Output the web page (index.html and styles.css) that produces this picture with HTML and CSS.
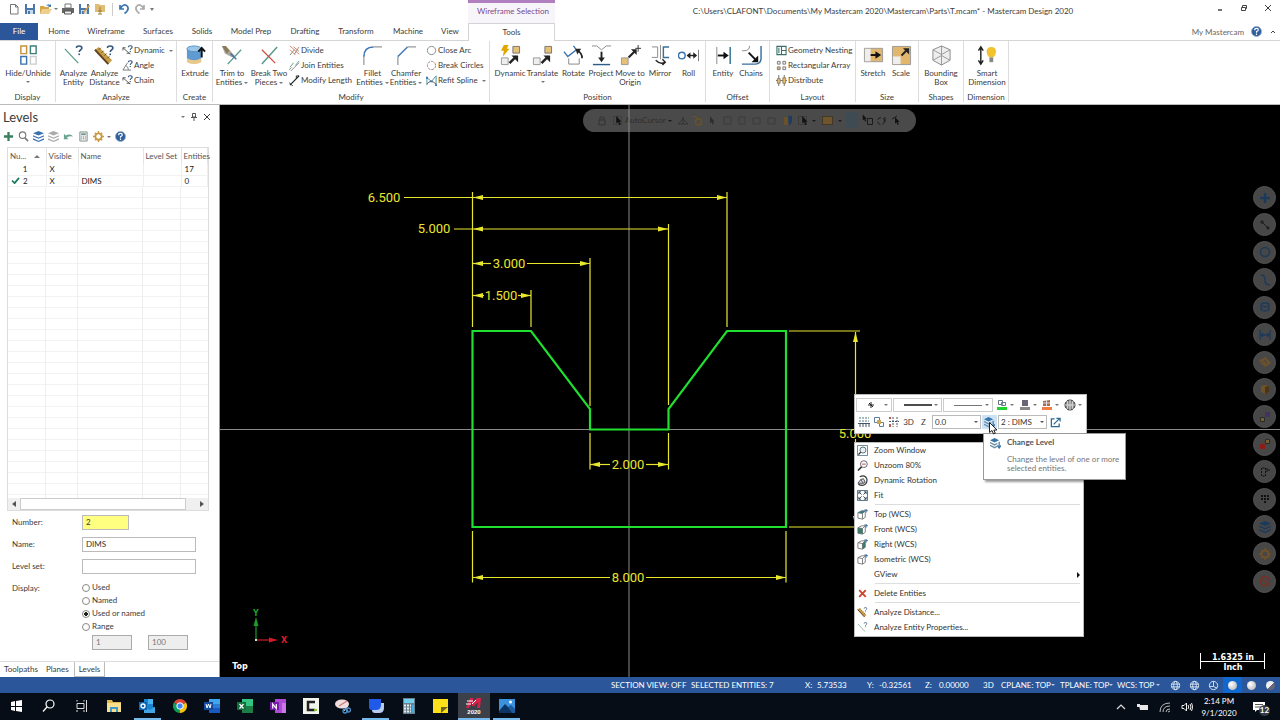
FILE: index.html
```html
<!DOCTYPE html>
<html lang="en">
<head>
<meta charset="utf-8">
<title>Mastercam Design 2020</title>
<link rel="stylesheet" href="styles.css">
</head>
<body>
<svg class="defs" aria-hidden="true">
  <symbol id="q" viewBox="0 0 8 11"><path d="M1 3.2C1 .4 6.8.4 6.8 3.2 6.8 5.2 4 5 4 7.4M4 9v1.8" fill="none" stroke="#34577f" stroke-width="1.7"/></symbol>
  <symbol id="page" viewBox="0 0 12 12"><path d="M2.5 1.5h5l2.500 2.500v7h-7.500zM7.500 1.500v2.500h2.500" fill="#fff" stroke="#777"/></symbol>
  <symbol id="save" viewBox="0 0 12 12"><path d="M1 1h10v10H1z" fill="#4a78ad"/><path d="M3 1h6v4H3z" fill="#fff"/><path d="M3 7h6v4H3z" fill="#c9d8ea"/><path d="M4 8h2v3H4z" fill="#4a78ad"/></symbol>
  <symbol id="folder" viewBox="0 0 12 12"><path d="M0 3h4l1 1h4v7H0z" fill="#d7a54c"/><path d="M2 6h10l-3 5H0z" fill="#efcf8e"/><path d="M6 3q2-3 4-1l1-1v3H8l1-1q-1-1-3 0z" fill="#3f7ab5"/></symbol>
  <symbol id="print" viewBox="0 0 12 12"><path d="M3 1h6v4H3z" fill="#fff" stroke="#777"/><path d="M0 5h12v5H0z" fill="#666"/><path d="M2.500 8h7v3h-7z" fill="#eee" stroke="#555"/></symbol>
  <symbol id="zip" viewBox="0 0 12 12"><path d="M1 1h4l1 1h5v7H1z" fill="#dfbd74"/><path d="M6 4v7M4 8h4M4 11h4" stroke="#a37a2e"/></symbol>
  <symbol id="undo" viewBox="0 0 12 12"><path d="M2 2v4h4M2.300 5.500Q6-.5 9.500 3.500q2 3.500-3 7" fill="none" stroke="currentColor" stroke-width="1.700"/></symbol>
  <symbol id="help" viewBox="0 0 12 12"><circle cx="6" cy="6" r="5.500" fill="#2d5f9e" stroke="#9ab3cd"/><path d="M4 4.500q0-2 2-2t2 1.700Q8 5.500 6 6v1.300M6 8.300v1.400" fill="none" stroke="#fff" stroke-width="1.300"/></symbol>
  <symbol id="hide" viewBox="0 0 22 22" fill="none" stroke-width="1.500"><path d="M3 1h6v8H3z" stroke="#c69038"/><path d="M13 1h6v8h-6z" stroke="#3f8076"/><path d="M3 12h6v8H3z" stroke="#3971ad"/><path d="M13 12h6v8h-6z" stroke="#ccc"/></symbol>
  <symbol id="anent" viewBox="0 0 22 22"><path d="M2 4l14 15" stroke="#5a9b8b" stroke-width="1.300"/><use href="#q" x="13" y="0" width="8" height="11"/></symbol>
  <symbol id="andist" viewBox="0 0 22 22"><path d="M1 5l4-3 14 14-4 4z" fill="#c99d46"/><path d="M1 5l14 15" stroke="#5c4320" stroke-width="2"/><path d="M5 5l2-2M8 8l2-2M11 11l2-2M14 14l2-2" stroke="#5c4320"/><use href="#q" x="13" y="0" width="8" height="11"/></symbol>
  <symbol id="smdyn" viewBox="0 0 12 12"><path d="M1 3l8 7M1 3l3 0M1 3v3M5 9h4" fill="none" stroke="#555"/><use href="#q" x="6" y="0" width="6" height="8"/></symbol>
  <symbol id="smang" viewBox="0 0 12 12"><path d="M1 11L6 3M1 11h9M4 6q3 1 3 5" fill="none" stroke="#777"/><use href="#q" x="6" y="0" width="6" height="8"/></symbol>
  <symbol id="extr" viewBox="0 0 22 22"><path d="M2 14h15v4q-7.500 4-15 0z" fill="#e9c88c"/><path d="M2 4h15v10q-7.500 4-15 0z" fill="#5f9bd0"/><ellipse cx="9.500" cy="4" rx="7.500" ry="3" fill="#9cc7e8" stroke="#5790c2"/><path d="M17.500 13V4M14 7l3.500-4L21 7" stroke="#111" stroke-width="2" fill="none"/></symbol>
  <symbol id="trim" viewBox="0 0 22 22"><path d="M6 20L20 5" stroke="#5a9b8b" stroke-width="1.400"/><path d="M0 1h4l10 11-3 1L3 9z" fill="#aaa59b"/><path d="M0 1h4l4 5-3 3z" fill="#8d7b5e"/><path d="M9 9l6 6" stroke="#3971ad" stroke-width="1.500"/></symbol>
  <symbol id="brk" viewBox="0 0 22 22"><path d="M3 20L19 2" stroke="#5a9b8b" stroke-width="1.600"/><path d="M3 5l14 14" stroke="#d34b3c" stroke-width="1.300"/></symbol>
  <symbol id="divide" viewBox="0 0 12 12"><path d="M1 11L6 5M6 10l5-8" stroke="#888"/><path d="M1 1l10 9M1 5l6 6M5 2l6 5" stroke="#cf7c60"/></symbol>
  <symbol id="join" viewBox="0 0 12 12"><path d="M1 8l4-5M7 6l4-5" stroke="#5a9b8b"/><path d="M2 12L11 3M0 11l3-3" stroke="#888"/></symbol>
  <symbol id="modlen" viewBox="0 0 12 12"><path d="M1 11L11 1" stroke="#222" stroke-width="1.300"/><path d="M0 8l4 4M8 4V1h3" stroke="#222" fill="none"/></symbol>
  <symbol id="fillet" viewBox="0 0 22 22" fill="none"><path d="M2 21V11M12 2h9" stroke="#777"/><path d="M2 12Q2 2 12 2" stroke="#3f74b8" stroke-width="1.500"/></symbol>
  <symbol id="chamf" viewBox="0 0 22 22" fill="none"><path d="M2 21V12M12 2h9" stroke="#777"/><path d="M2 12L12 2" stroke="#3f74b8" stroke-width="1.500"/></symbol>
  <symbol id="circ" viewBox="0 0 12 12"><circle cx="6" cy="6" r="4.500" fill="none" stroke="#7c8b8b"/></symbol>
  <symbol id="circb" viewBox="0 0 12 12"><circle cx="6" cy="6" r="4.500" fill="none" stroke="#9c7b76" stroke-dasharray="3 1"/></symbol>
  <symbol id="refit" viewBox="0 0 12 12"><path d="M1 11V3l5 4 5-6v10" fill="none" stroke="#3f8ca0"/><path d="M1 10q4-6 10 0" fill="none" stroke="#555"/><path d="M0 2h2v2H0zM5 6h2v2H5zM10 10h2v2h-2z" fill="#3971ad"/></symbol>
  <symbol id="dyn" viewBox="0 0 22 22"><path d="M4 0h5L7 4h3L3 12l1-6H1z" fill="#e1a700"/><path d="M13.500 1.500h7v7h-7z" fill="#e6c078" stroke="#777"/><path d="M1.500 13.500h7v7h-7z" fill="#eee" stroke="#999"/><path d="M10 19l7-7" stroke="#222" stroke-width="2.600"/><path d="M12 11h7v7z" fill="#222"/></symbol>
  <symbol id="trans" viewBox="0 0 22 22"><path d="M13.500 1.500h7v7h-7z" fill="#e6c078" stroke="#777"/><path d="M1.500 13.500h7v7h-7z" fill="#eee" stroke="#999"/><path d="M10 19l7-7" stroke="#222" stroke-width="2.600"/><path d="M12 11h7v7z" fill="#222"/></symbol>
  <symbol id="rot" viewBox="0 0 22 22" fill="none"><path d="M1 7l4 5 9-7-3-4" stroke="#3971ad" stroke-width="1.400"/><path d="M6 14v6h11v-6" stroke="#888"/><path d="M20 14q0-6-5-8" stroke="#222" stroke-width="1.800"/><path d="M13 4l6 0-4 6z" fill="#222"/></symbol>
  <symbol id="proj" viewBox="0 0 22 22" fill="none"><path d="M1 1h5l5 4 5-4h5" stroke="#888"/><path d="M2 20.500h18" stroke="#2d5f86" stroke-width="1.500"/><path d="M11 7v8" stroke="#222" stroke-width="2"/><path d="M7.500 13h7L11 18z" fill="#222"/></symbol>
  <symbol id="move" viewBox="0 0 22 22"><path d="M1.500 13.500h7v7h-7z" fill="#e6c078" stroke="#999"/><path d="M9 13l7-7" stroke="#222" stroke-width="2.200"/><path d="M11.500 4.500h6v6z" fill="#222"/><path d="M19 0v7M16 3.500h6" stroke="#333"/></symbol>
  <symbol id="mirror" viewBox="0 0 22 22" fill="none"><path d="M2 2h6v11H2M11 0v15" stroke="#888"/><path d="M20 2h-6v11h6" stroke="#3b6f99" stroke-width="1.500"/><path d="M6 16q5 5 10 2M13 15l3 3-3 3" stroke="#222" stroke-width="1.500"/></symbol>
  <symbol id="roll" viewBox="0 0 22 22" fill="none"><circle cx="4" cy="11" r="3.500" stroke="#3971ad" stroke-width="1.500"/><path d="M10 11h9" stroke="#222" stroke-width="1.500"/><path d="M13 7.500v7L9 11zM16 7.500v7l4-3.500z" fill="#222"/><path d="M21.500 5v12" stroke="#777"/></symbol>
  <symbol id="offent" viewBox="0 0 22 22" fill="none"><path d="M4 2v18" stroke="#888"/><path d="M18 2v18" stroke="#3a7b94" stroke-width="1.600"/><path d="M5 11h8" stroke="#111" stroke-width="2"/><path d="M11 7l5.500 4-5.500 4z" fill="#111"/></symbol>
  <symbol id="offch" viewBox="0 0 22 22" fill="none"><path d="M1 6h2q6 0 6-5" stroke="#888"/><path d="M1 20h14q6 0 6-6V1" stroke="#3a6f9f" stroke-width="1.500"/><path d="M8 8l7 7" stroke="#111" stroke-width="2"/><path d="M18 11v7h-7z" fill="#111"/></symbol>
  <symbol id="nest" viewBox="0 0 12 12"><path d="M1 1.500h10v9H1zM6 1.500v9M6 6h5" fill="#fff" stroke="#3c6f6a" stroke-width="1.200"/><path d="M2 3h2v6H2z" fill="#79aba0"/></symbol>
  <symbol id="array" viewBox="0 0 12 12" fill="#eee" stroke="#777"><path d="M1.500 1.500h3v3h-3zM7.500 1.500h3v3h-3zM7.500 7.500h3v3h-3z"/><path d="M1.500 7.500h3v3h-3z" fill="#e6c078"/></symbol>
  <symbol id="distr" viewBox="0 0 12 12"><path d="M3 0v12M9 0v12M0 6h12" stroke="#666"/><path d="M1.500 4h3v5h-3zM7.500 3h3v6h-3z" fill="#e6c078" stroke="#8d7b5e"/></symbol>
  <symbol id="stretch" viewBox="0 0 22 22"><path d="M1.500 3.500h19v14h-19z" fill="#e3b66e" stroke="#999"/><path d="M2 4h6v13H2z" fill="#eee"/><path d="M8 10.500h7" stroke="#111" stroke-width="2"/><path d="M13 6.500l6 4-6 4z" fill="#111"/></symbol>
  <symbol id="scale" viewBox="0 0 22 22"><path d="M1.500 1.500h19v19h-19z" fill="#e3b66e" stroke="#999"/><path d="M2 12h8v8H2z" fill="#eee"/><path d="M11 11l6-6" stroke="#222" stroke-width="2"/><path d="M12.500 3.500h6.500V10z" fill="#222"/></symbol>
  <symbol id="bbox" viewBox="0 0 22 22"><path d="M11 1l9 4v11l-9 5-9-5V5z" fill="#eee" stroke="#888"/><path d="M2 5l9 5 9-5M11 10v11M11 1v10L2 16M11 11l9 5" fill="none" stroke="#999"/></symbol>
  <symbol id="smart" viewBox="0 0 22 22"><path d="M4 3v16M1.500 6L4 2l2.500 4M1.500 16L4 20l2.500-4" fill="none" stroke="#222" stroke-width="1.500"/><path d="M15 2q5 0 5 5 0 3-3 6h-4q-3-3-3-6 0-5 5-5z" fill="#f2c32e"/><path d="M13 13h4v5h-4z" fill="#888"/></symbol>
  <symbol id="plus" viewBox="0 0 12 12"><path d="M6 1v10M1 6h10" stroke="currentColor" stroke-width="2.500"/></symbol>
  <symbol id="mag" viewBox="0 0 12 12"><circle cx="5" cy="4.500" r="3.500" fill="none" stroke="currentColor" stroke-width="1.200"/><path d="M7.500 7.500L11 11" stroke="currentColor" stroke-width="1.700"/></symbol>
  <symbol id="layers" viewBox="0 0 12 12" fill="currentColor"><path d="M6 0l6 2.500L6 5 0 2.500zM0 4.500l6 2.500L12 4.500V6L6 8.500 0 6zM0 8l6 2.500L12 8V9.500L6 12 0 9.500z"/></symbol>
  <symbol id="reset" viewBox="0 0 12 12"><path d="M1 3v6h5L4 7q3-2 7-1-3-4-8-1z" fill="#6aa294"/></symbol>
  <symbol id="calc" viewBox="0 0 12 12"><path d="M2 1h8v10H2z" fill="#eee" stroke="#7d8f8a"/><path d="M3.500 2.500h5v2h-5z" fill="#6d9a8e"/><path d="M3.500 6.500h5M3.500 8.500h5" stroke="#777" stroke-dasharray="1 1"/></symbol>
  <symbol id="gear" viewBox="0 0 12 12"><circle cx="6" cy="6" r="3.500" fill="none" stroke="currentColor" stroke-width="2"/><path d="M6 0v2M6 10v2M0 6h2M10 6h2M2 2l1 1M9 9l1 1M10 2L9 3M3 9l-1 1" stroke="currentColor" stroke-width="1.500"/></symbol>
  <symbol id="pin" viewBox="0 0 8 8"><path d="M2.500.5h3V4h-3zM1 4.500h6M4 4.500V8" fill="none" stroke="#555"/></symbol>
  <symbol id="cross" viewBox="0 0 8 8"><path d="M1 1l6 6M7 1L1 7" stroke="currentColor"/></symbol>
  <symbol id="cube" viewBox="0 0 12 12"><path d="M1 4l4-2h4v7l-3 2-5-1z" fill="#fff" stroke="#777"/><path d="M1 4l5 1 3-3M6 5v6" fill="none" stroke="#777"/><path d="M8 1l4 1M10 0v4" stroke="#3a6f9f"/></symbol>
  <symbol id="cursor" viewBox="0 0 12 12"><path d="M3 0v10l2.300-2L7 12l2-1-2-3.500h3z" fill="currentColor"/></symbol>
  <symbol id="globe" viewBox="0 0 12 12" fill="none" stroke="#dce8f6"><circle cx="6" cy="6" r="4.500"/><ellipse cx="6" cy="6" rx="2" ry="4.500"/><path d="M1.500 4.500h9M1.500 7.500h9"/></symbol>
  <symbol id="fitwin" viewBox="0 0 12 12"><path d="M.5 .5h11v11H.5z" fill="#fff" stroke="#4a6a80"/><path d="M2 2l3 3M10 2L7 5M2 10l3-3M10 10L7 7M2 4.500V2h2.500M7.500 2H10v2.500M2 7.500V10h2.500M7.500 10H10V7.500" fill="none" stroke="#345"/></symbol>
  <symbol id="zwin" viewBox="0 0 12 12"><path d="M.5 .5h11v11H.5z" fill="#fff" stroke="#5f7f93"/><circle cx="6.500" cy="5.500" r="3.300" fill="#e7f0f5" stroke="#4a6a70"/><path d="M4 8l-2.500 2.500" stroke="#333" stroke-width="1.500"/></symbol>
  <symbol id="unz" viewBox="0 0 12 12"><circle cx="7.500" cy="4.500" r="3.700" fill="#fff" stroke="#665560"/><path d="M5 7.500l-4 4" stroke="#333" stroke-width="1.700"/><path d="M5.500 4.500h4" stroke="#a44"/></symbol>
  <symbol id="dynrot" viewBox="0 0 12 12"><path d="M3 2q6-3 8 3-0 6-5 6.300-3 0-4.500-1.500" fill="none" stroke="#333" stroke-width="1.300"/><path d="M4 5l-3 4h6zM4 5l3-1 2 4-2 1" fill="#ddd" stroke="#445"/></symbol>
  <symbol id="chlev" viewBox="0 0 12 12"><path d="M5 0l5 2.500L5 5 0 2.500z" fill="#3b75a8"/><path d="M0 5l5 2.500L8 6M0 8l5 2.500L8 9" fill="none" stroke="#6e8fa8" stroke-width="1.500"/><path d="M10 4v6M8 8l2 3 2-3" fill="none" stroke="#3b75a8" stroke-width="1.300"/></symbol>
</svg>

<header class="titlebar">
  <div class="qat">
    <button aria-label="New"><svg class="i12"><use href="#page"/></svg></button>
    <button aria-label="Save"><svg class="i12"><use href="#save"/></svg></button>
    <button class="with-caret" aria-label="Open"><svg class="i12"><use href="#folder"/></svg><i class="caret"></i></button>
    <button aria-label="Print"><svg class="i12"><use href="#print"/></svg></button>
    <button aria-label="Save as"><svg class="i12" viewBox="0 0 12 12"><use href="#save"/><path d="M5 9l6-7 1 1-6 7z" fill="#d99c34"/></svg></button>
    <button aria-label="Zip2Go"><svg class="i12"><use href="#zip"/></svg></button>
    <span class="qat-sep"></span>
    <button class="blue" aria-label="Undo"><svg class="i12"><use href="#undo"/></svg></button>
    <button class="faded" aria-label="Redo"><svg class="i12 flip"><use href="#undo"/></svg></button>
    <button class="more" aria-label="Customize"><i class="caret"></i></button>
  </div>
  <div class="context">Wireframe Selection</div>
  <div class="doc-title">C:\Users\CLAFONT\Documents\My Mastercam 2020\Mastercam\Parts\T.mcam* - Mastercam Design 2020</div>
  <div class="win-btns">
    <button aria-label="Minimize"><svg class="i8" viewBox="0 0 8 8"><path d="M2 6h4" stroke="#444" stroke-width="1.500"/></svg></button>
    <button aria-label="Restore"><svg class="i8" viewBox="0 0 8 8" fill="none" stroke="#444"><path d="M1.500 3.500h4v3h-4zM2.500 3.500v-2h4v3h-1"/></svg></button>
    <button aria-label="Close"><svg class="i8"><use href="#cross"/></svg></button>
  </div>
</header>

<nav class="tabs">
  <button class="file w38">File</button><button class="w42">Home</button><button class="w52">Wireframe</button><button class="w52">Surfaces</button><button class="w36">Solids</button><button class="w62">Model Prep</button><button class="w46">Drafting</button><button class="w56">Transform</button><button class="w48">Machine</button><button class="w36">View</button><button class="tools">Tools</button>
  <span class="grow"></span>
  <span class="mymc">My Mastercam</span>
  <button class="helpbtn" aria-label="Help"><svg class="i10"><use href="#help"/></svg></button>
  <button class="collapse" aria-label="Collapse ribbon"><svg class="i8" viewBox="0 0 8 8"><path d="M2 5l2-2 2 2" fill="none" stroke="#444"/></svg></button>
</nav>

<section class="ribbon">
  <div class="group g-display"><div class="tools-row">
    <button class="big w56"><svg class="i22"><use href="#hide"/></svg><span>Hide/Unhide</span><i class="caret"></i></button>
  </div><h3>Display</h3></div>
  <div class="group g-analyze"><div class="tools-row">
    <button class="big w31"><svg class="i22"><use href="#anent"/></svg><span>Analyze<br>Entity</span></button>
    <button class="big w31"><svg class="i22"><use href="#andist"/></svg><span>Analyze<br>Distance</span></button>
    <div class="stack">
      <button><svg class="i10"><use href="#smdyn"/></svg>Dynamic<i class="caret"></i></button>
      <button><svg class="i10"><use href="#smang"/></svg>Angle</button>
      <button><svg class="i10"><use href="#smdyn"/></svg>Chain</button>
    </div>
  </div><h3>Analyze</h3></div>
  <div class="group g-create"><div class="tools-row">
    <button class="big w36"><svg class="i22"><use href="#extr"/></svg><span>Extrude</span></button>
  </div><h3>Create</h3></div>
  <div class="group g-modify"><div class="tools-row">
    <button class="big w38"><svg class="i22"><use href="#trim"/></svg><span>Trim to<br>Entities<i class="caret"></i></span></button>
    <button class="big w36"><svg class="i22"><use href="#brk"/></svg><span>Break Two<br>Pieces<i class="caret"></i></span></button>
    <div class="stack s-wide">
      <button><svg class="i10"><use href="#divide"/></svg>Divide</button>
      <button><svg class="i10"><use href="#join"/></svg>Join Entities</button>
      <button><svg class="i10"><use href="#modlen"/></svg>Modify Length</button>
    </div>
    <button class="big w31"><svg class="i22"><use href="#fillet"/></svg><span>Fillet<br>Entities<i class="caret"></i></span></button>
    <button class="big w36"><svg class="i22"><use href="#chamf"/></svg><span>Chamfer<br>Entities<i class="caret"></i></span></button>
    <div class="stack">
      <button><svg class="i10"><use href="#circ"/></svg>Close Arc</button>
      <button><svg class="i10"><use href="#circb"/></svg>Break Circles</button>
      <button><svg class="i10"><use href="#refit"/></svg>Refit Spline<i class="caret"></i></button>
    </div>
  </div><h3>Modify</h3></div>
  <div class="group g-position"><div class="tools-row">
    <button class="big w34"><svg class="i22"><use href="#dyn"/></svg><span>Dynamic</span></button>
    <button class="big w31"><svg class="i22"><use href="#trans"/></svg><span>Translate</span><i class="caret"></i></button>
    <button class="big w31"><svg class="i22"><use href="#rot"/></svg><span>Rotate</span></button>
    <button class="big w24"><svg class="i22"><use href="#proj"/></svg><span>Project</span></button>
    <button class="big w34"><svg class="i22"><use href="#move"/></svg><span>Move to<br>Origin</span></button>
    <button class="big w26"><svg class="i22"><use href="#mirror"/></svg><span>Mirror</span></button>
    <button class="big w31"><svg class="i22"><use href="#roll"/></svg><span>Roll</span></button>
  </div><h3>Position</h3></div>
  <div class="group g-offset"><div class="tools-row">
    <button class="big w28"><svg class="i22"><use href="#offent"/></svg><span>Entity</span></button>
    <button class="big w28"><svg class="i22"><use href="#offch"/></svg><span>Chains</span></button>
  </div><h3>Offset</h3></div>
  <div class="group g-layout"><div class="tools-row">
    <div class="stack">
      <button><svg class="i10"><use href="#nest"/></svg>Geometry Nesting</button>
      <button><svg class="i10"><use href="#array"/></svg>Rectangular Array</button>
      <button><svg class="i10"><use href="#distr"/></svg>Distribute</button>
    </div>
  </div><h3>Layout</h3></div>
  <div class="group g-size"><div class="tools-row">
    <button class="big w28"><svg class="i22"><use href="#stretch"/></svg><span>Stretch</span></button>
    <button class="big w28"><svg class="i22"><use href="#scale"/></svg><span>Scale</span></button>
  </div><h3>Size</h3></div>
  <div class="group g-shapes"><div class="tools-row">
    <button class="big w44"><svg class="i22"><use href="#bbox"/></svg><span>Bounding<br>Box</span></button>
  </div><h3>Shapes</h3></div>
  <div class="group g-shapes"><div class="tools-row">
    <button class="big w46"><svg class="i22"><use href="#smart"/></svg><span>Smart<br>Dimension</span></button>
  </div><h3>Dimension</h3></div>
</section>

<main class="work">
  <aside class="panel">
    <div class="panel-head"><h2>Levels</h2><i class="caret"></i><svg class="i8"><use href="#pin"/></svg><svg class="i8"><use href="#cross"/></svg></div>
    <div class="panel-tools">
      <button class="green" aria-label="Add"><svg class="i10"><use href="#plus"/></svg></button>
      <button class="grey" aria-label="Find"><svg class="i10"><use href="#mag"/></svg></button>
      <button class="blue" aria-label="Show all"><svg class="i10"><use href="#layers"/></svg></button>
      <button class="faded" aria-label="Hide all"><svg class="i10"><use href="#layers"/></svg></button>
      <button aria-label="Reset"><svg class="i10"><use href="#reset"/></svg></button>
      <button aria-label="Report"><svg class="i10"><use href="#calc"/></svg></button>
      <button class="gold with-caret" aria-label="Options"><svg class="i10"><use href="#gear"/></svg><i class="caret"></i></button>
      <button aria-label="Help"><svg class="i10"><use href="#help"/></svg></button>
    </div>
    <div class="list">
      <table>
        <thead><tr><th class="c-num">Nu...<i class="up"></i></th><th class="c-vis">Visible</th><th class="c-name">Name</th><th class="c-set">Level Set</th><th>Entities</th></tr></thead>
        <tbody>
          <tr><td class="num">1</td><td>X</td><td></td><td></td><td>17</td></tr>
          <tr><td class="num"><svg class="tick" viewBox="0 0 10 8"><path d="M1 4l3 3 5-6" fill="none" stroke="#1f7a5c" stroke-width="2"/></svg>2</td><td>X</td><td>DIMS</td><td></td><td>0</td></tr>
        </tbody>
      </table>
      <div class="empty-rows"></div>
      <div class="hscroll"><i class="left"></i><span class="thumb"></span><i class="right"></i></div>
    </div>
    <form class="props">
      <label for="num">Number:</label><input id="num" class="yellow" value="2">
      <label for="name">Name:</label><input id="name" value="DIMS">
      <label for="set">Level set:</label><input id="set">
      <span class="disp">Display:</span>
      <div class="radios">
        <label><input type="radio" name="d">Used</label>
        <label><input type="radio" name="d">Named</label>
        <label><input type="radio" name="d" checked>Used or named</label>
        <label><input type="radio" name="d">Range</label>
        <div class="range"><input value="1" disabled aria-label="From"><input value="100" disabled aria-label="To"></div>
      </div>
    </form>
    <div class="panel-tabs"><button>Toolpaths</button><button>Planes</button><button class="on">Levels</button></div>
  </aside>

  <section class="canvas">
    <div class="selbar">
      <svg viewBox="583 109 333 23">
        <g fill="none" stroke="#333"><path d="M599 120h6v5h-6zM600 120v-3h4v3"/><path d="M613.500 116.500h8v8h-8z" stroke-dasharray="1 1"/><path d="M678 124l5-5 5 5zM683 117v7"/><circle cx="698.500" cy="122" r="3" stroke="#6a5128" stroke-width="1.500"/><path d="M724 117h7v7h-7zM739 117h6v7h-6zM753 118h7v6h-7zM768 118h7v6h-7zM798.500 116.500h8v8h-8z" stroke="#3b3b3b"/></g>
        <path d="M692 116h4l3 3z" fill="#6a5128"/>
        <path d="M822.500 116.500h10v8h-10z" fill="#6e552d" stroke="#2a2010" stroke-dasharray="1 1"/>
        <path d="M846 112h12v16h-12z" fill="#3f4b52"/>
        <path d="M784 117h4v8h-4z" fill="#6a5128"/><path d="M788 116h4v6l-3 4z" fill="#1f3c60"/>
        <g color="#111"><use href="#cursor" x="614" y="116" width="9" height="9"/><use href="#cursor" x="800" y="116" width="9" height="9"/><use href="#cursor" x="861" y="114" width="7" height="8"/><use href="#cursor" x="893" y="117" width="8" height="8"/></g>
        <g color="#2d2d2d"><use href="#cursor" x="708" y="116" width="8" height="9"/></g>
        <g fill="none" stroke="#1b1b1b"><path d="M867.500 118.500h5v6h-5z"/><circle cx="881" cy="121" r="3.500" stroke-dasharray="4 2"/><path d="M892 119l5-3M885 117v5"/></g>
        <path d="M668 120h4l-2 2zM812 120h4l-2 2zM838 120h4l-2 2z" fill="#1b1b1b"/>
        <text class="ac" x="625" y="123">AutoCursor</text>
      </svg>
    </div>

    <div class="quickmask">
      <span class="blue"><svg class="i12"><use href="#plus"/></svg></span>
      <span><svg class="i12" viewBox="0 0 12 12"><path d="M1 3h4M3 1v4M3 3l6 6M7 9h4M9 7v4" fill="none" stroke="#1c1c1c"/></svg></span>
      <span class="blue"><svg class="i12" viewBox="0 0 12 12"><circle cx="6" cy="6" r="4.500" fill="none" stroke="currentColor" stroke-width="1.500"/></svg></span>
      <span class="blue"><svg class="i12" viewBox="0 0 12 12"><path d="M2 1q4 0 4 5t5 5" fill="none" stroke="currentColor" stroke-width="1.500"/></svg></span>
      <span class="blue"><svg class="i12" viewBox="0 0 12 12"><path d="M2 3q4-2 8 0v6q-4 2-8 0zM2 8l8-4M2 4l8 4" fill="none" stroke="currentColor" stroke-width="1.300"/></svg></span>
      <span class="blue"><svg class="i12" viewBox="0 0 12 12"><path d="M1 1v10M11 1v10M2 6h8M4 4L2 6l2 2M8 4l2 2-2 2" fill="none" stroke="currentColor" stroke-width="1.300"/></svg></span>
      <span class="gold"><svg class="i12" viewBox="0 0 12 12"><path d="M1 5l5-3 5 5-5 3zM3 3l4 6M6 2l4 6" fill="none" stroke="currentColor" stroke-width="1.500"/></svg></span>
      <span class="gold"><svg class="i12" viewBox="0 0 12 12"><path d="M2 3l4-1 4 1v6l-4 2-4-2z" fill="currentColor"/><path d="M6 4l4-1v6l-4 2z" fill="#4a3516"/></svg></span>
      <span><svg class="i12" viewBox="0 0 12 12"><path d="M6 1h5v5H6z" fill="#46305f"/><path d="M1.500 6.500h4v4h-4z" fill="#75602f" stroke="#2a2a2a"/></svg></span>
      <span><svg class="i12" viewBox="0 0 12 12"><path d="M6.500 1.500h4v4h-4z" fill="#75602f" stroke="#2a2a2a"/><path d="M1 6h5v5H1z" fill="#8c1c14"/></svg></span>
      <span><svg class="i12" viewBox="0 0 12 12"><path d="M2.500 2v8h4V2zM7 3h3v2H7" fill="none" stroke="#111" stroke-dasharray="2 1"/></svg></span>
      <span><svg class="i12" viewBox="0 0 12 12"><path d="M2 3h8M2 6h8M5 9h3" stroke="#111" stroke-width="2" stroke-dasharray="2 1"/></svg></span>
      <span class="blue"><svg class="i12"><use href="#layers"/></svg></span>
      <span class="gold"><svg class="i12"><use href="#gear"/></svg></span>
      <span><svg class="i12" viewBox="0 0 12 12"><circle cx="6" cy="6" r="4.500" fill="none" stroke="#7a2f22" stroke-width="1.300"/><path d="M3 3l6 6" stroke="#7a2f22" stroke-width="1.300"/></svg></span>
    </div>

    <svg class="drawing" viewBox="220 105 1060 572" role="img" aria-label="Part geometry with dimensions">
      <defs><marker id="arr" viewBox="0 0 10 6" refX="10" refY="3" markerWidth="10" markerHeight="6" markerUnits="userSpaceOnUse" orient="auto-start-reverse"><path d="M0 .5L10 3 0 5.500z" fill="#e9e62e"/></marker></defs>
      <path d="M629 105V677M220 429.500H1280" stroke="#8a8a8a" stroke-width="1"/>
      <g fill="none" stroke="#e9e62e" stroke-width="1.200">
        <path d="M472.500 192V327M727 192V327M668.500 224V405M590 258V406M531 290V327M590 433V469.500M668.500 433V469.500M472.500 531V582.500M786 531V582.500M789 331H860M789 527H860"/>
        <path d="M404 197.500H473M454 229H473"/>
        <path marker-start="url(#arr)" marker-end="url(#arr)" d="M473 197.500H727"/>
        <path marker-start="url(#arr)" marker-end="url(#arr)" d="M473 229H668"/>
        <path marker-start="url(#arr)" d="M473 263.500H491"/><path marker-end="url(#arr)" d="M527 263.500H590"/>
        <path marker-start="url(#arr)" d="M473 295.500H484"/><path marker-end="url(#arr)" d="M518 295.500H531"/>
        <path marker-start="url(#arr)" d="M590 464.500H610"/><path marker-end="url(#arr)" d="M646 464.500H668"/>
        <path marker-start="url(#arr)" d="M473 577.500H610"/><path marker-end="url(#arr)" d="M646 577.500H786"/>
        <path marker-start="url(#arr)" d="M855.500 332V427"/><path marker-end="url(#arr)" d="M855.500 439V526"/>
      </g>
      <path d="M472.500 331H531L590 409V429.500H668.500V409L727 331H786V527H472.500z" fill="none" stroke="#1fe02f" stroke-width="2.200"/>
      <g class="dims">
        <text x="384" y="202">6.500</text><text x="434" y="233">5.000</text><text x="509" y="268">3.000</text><text x="501" y="300">1.500</text><text x="628" y="469">2.000</text><text x="628" y="582">8.000</text><text x="855" y="438">5.000</text>
      </g>
      <g fill="none" stroke-width="1.200"><path d="M256 640V624" stroke="#1f9a2a"/><path d="M256 640H271" stroke="#d01c28"/></g>
      <path d="M253.500 626L256 617l2.500 9z" fill="#1f9a2a"/><path d="M269 637.500l9 2.500-9 2.500z" fill="#d01c28"/><path d="M255 639h2v2h-2z" fill="#ddd"/>
      <g class="axis"><text x="256" y="616" fill="#1f9a2a">Y</text><text x="284" y="643" fill="#e01c28">X</text></g>
      <path d="M1200.500 653v16M1264.500 653v16M1200 661.500h65" stroke="#fff"/>
      <g class="scale"><text x="1233" y="660">1.6325 in</text><text x="1233" y="670">Inch</text><text x="240" y="669">Top</text></g>
    </svg>

    <div class="minibar">
      <div class="mrow">
        <button class="drop d36" aria-label="Point style"><svg viewBox="0 0 8 8" class="i8"><path d="M4 1v6M1 4h6M2 2l4 4" stroke="#222" fill="none"/></svg><i class="caret"></i></button>
        <button class="drop d50" aria-label="Line style"><svg viewBox="0 0 28 4" class="line"><path d="M0 2h28" stroke="#111" stroke-width="1.500"/></svg><i class="caret"></i></button>
        <button class="drop d50" aria-label="Line width"><svg viewBox="0 0 28 4" class="line"><path d="M0 2.500h28" stroke="#777"/></svg><i class="caret"></i></button>
        <button class="ic" aria-label="Wireframe color"><svg viewBox="0 0 12 12" class="i12"><path d="M2.500 1.500h4v4h-4zM5.500 3.500h4v3h-4z" fill="#fff" stroke="#678"/><path d="M1 8h10v3H1z" fill="#1fd32c"/></svg><i class="caret"></i></button>
        <button class="ic" aria-label="Solid color"><svg viewBox="0 0 12 12" class="i12"><path d="M3 1h6v6H3z" fill="#667"/><path d="M1 8h10v3H1z" fill="#888"/></svg><i class="caret"></i></button>
        <button class="ic" aria-label="Surface color"><svg viewBox="0 0 12 12" class="i12"><path d="M2 2l7-1v6H2z" fill="#a8674f"/><path d="M5.500 1v6M2 4h7" stroke="#ddd"/><path d="M1 8h10v3H1z" fill="#f47b41"/></svg><i class="caret"></i></button>
        <button class="ic" aria-label="Material"><svg viewBox="0 0 12 12" class="i12"><circle cx="6" cy="6" r="5" fill="#888" stroke="#333"/><path d="M1 6h10M6 1v10M3 2q2 4 0 8M9 2q-2 4 0 8" stroke="#ddd" fill="none"/></svg><i class="caret"></i></button>
      </div>
      <div class="mrow">
        <button class="ic2" aria-label="Attributes"><svg viewBox="0 0 12 12" class="i12"><path d="M1 2h10M1 5h10" stroke="#4c7d86" stroke-dasharray="2 1"/><path d="M0 7.500h12M2 8v3M5 8v3M8 8v3M11 8v3" stroke="#456"/></svg></button>
        <button class="ic2" aria-label="Copy"><svg viewBox="0 0 12 12" class="i12"><path d="M1.500 1.500h5v5h-5zM6.500 6.500h4v4h-4z" fill="#fff" stroke="#5b7fa0"/><path d="M4 4h4v4H4z" fill="#cfa558"/></svg></button>
        <button class="ic2" aria-label="Move"><svg viewBox="0 0 12 12" class="i12"><path d="M1 1h2v2H1zM1 8h2v3H1z" fill="#b85c50"/><path d="M5 1v10M9 1v10M1 5.500h10" stroke="#456" stroke-dasharray="2 1"/></svg></button>
        <button class="ic2">3D</button><button class="ic2">Z</button>
        <label class="sel"><select aria-label="Z depth"><option>0.0</option></select></label>
        <button class="ic2 hot" aria-label="Change Level"><svg class="i10"><use href="#chlev"/></svg></button>
        <label class="sel"><select aria-label="Level"><option>2 : DIMS</option></select></label>
        <button class="ic2" aria-label="Open in window"><svg viewBox="0 0 12 12" class="i10"><path d="M5 2H1.500v8.500H10V7M4 8l6-6M7 1.500h4V5" fill="none" stroke="#2d6a94" stroke-width="1.400"/></svg></button>
      </div>
    </div>

    <div class="menu" role="menu">
      <button><svg class="i10"><use href="#zwin"/></svg>Zoom Window</button>
      <button><svg class="i10"><use href="#unz"/></svg>Unzoom 80%</button>
      <button><svg class="i10"><use href="#dynrot"/></svg>Dynamic Rotation</button>
      <button><svg class="i10"><use href="#fitwin"/></svg>Fit</button>
      <hr>
      <button><svg class="i10" viewBox="0 0 12 12"><use href="#cube"/><path d="M1 4l4-2h4L6 5z" fill="#3f7a80"/></svg>Top (WCS)</button>
      <button><svg class="i10" viewBox="0 0 12 12"><use href="#cube"/><path d="M1 4l5 1v6l-5-1z" fill="#3f7a6a"/></svg>Front (WCS)</button>
      <button><svg class="i10" viewBox="0 0 12 12"><use href="#cube"/><path d="M6 5l3-3v7l-3 2z" fill="#3f7a6a"/></svg>Right (WCS)</button>
      <button><svg class="i10"><use href="#cube"/></svg>Isometric (WCS)</button>
      <button><span class="i10"></span>GView<i class="sub"></i></button>
      <hr>
      <button><svg class="i10 red" viewBox="-1 -1 10 10"><path d="M1 1l6 6M7 1L1 7" stroke="currentColor" stroke-width="1.700"/></svg>Delete Entities</button>
      <hr>
      <button><svg class="i10"><use href="#andist"/></svg>Analyze Distance...</button>
      <button><svg class="i10"><use href="#anent"/></svg>Analyze Entity Properties...</button>
    </div>

    <div class="tip" role="tooltip">
      <svg class="i10"><use href="#chlev"/></svg>
      <div><strong>Change Level</strong><p>Change the level of one or more selected entities.</p></div>
    </div>
    <svg class="pointer" viewBox="0 0 9 13"><path d="M.5 .5v10l2.500-2 1.500 3.500 1.800-.8L4.800 8H8z" fill="#fff" stroke="#222"/></svg>
  </section>
</main>

<div class="status">
  <span class="s80">SECTION VIEW: OFF</span><span class="s114">SELECTED ENTITIES: 7</span>
  <span class="s12">X:</span><span class="s50">5.73533</span><span class="s12">Y:</span><span class="s46">-0.32561</span><span class="s14">Z:</span><span class="s44">0.00000</span><span class="s18">3D</span>
  <button class="s59">CPLANE: TOP<i class="caret"></i></button><button class="s57">TPLANE: TOP<i class="caret"></i></button><button class="s49">WCS: TOP<i class="caret"></i></button>
  <button class="sh"><svg class="i10"><use href="#globe"/></svg></button><button class="sh"><svg class="i10"><use href="#globe"/></svg></button><button class="sh"><svg class="i10" viewBox="0 0 12 12"><circle cx="6" cy="6" r="4.500" fill="none" stroke="#dce8f6"/><path d="M6 1.500V7M6 7H1.500M6 7l4 2" stroke="#dce8f6"/></svg></button><button class="sh lit"><i class="ball"></i></button><button class="sh"><i class="ball"></i></button><button class="sh"><i class="ball half"></i></button>
</div>

<footer class="taskbar">
  <div class="apps">
    <button aria-label="Start"><svg class="i16" viewBox="0 0 16 16" fill="#fff"><path d="M3 4l4-1v5H3zM8 3l6-1v6H8zM3 9h4v4l-4-1zM8 9h6v5l-6-1z"/></svg></button>
    <button aria-label="Search"><svg class="i16" viewBox="0 0 16 16"><circle cx="9" cy="6" r="4" fill="none" stroke="#fff" stroke-width="1.200"/><path d="M6 9l-4 4.500" stroke="#fff" stroke-width="1.200"/></svg></button>
    <button aria-label="Task view"><svg class="i16" viewBox="0 0 16 16" fill="none" stroke="#ddd"><path d="M3 5.500h7v5H3zM3 3.500V2M10 3.500V2M3 12v2M10 12v2M12.500 2v12"/></svg></button>
    <button aria-label="Explorer"><svg class="i16" viewBox="0 0 16 16"><path d="M1 2h5l1 2h8v10H1z" fill="#e3b94d"/><path d="M1 5h14v9H1z" fill="#fbdf8a"/><path d="M4 9h8v5h-2v-3H6v3H4z" fill="#3f9ad0"/></svg></button>
    <button class="run" aria-label="Outlook"><svg class="i16" viewBox="0 0 16 16"><path d="M5 1h9v8h2v6H5z" fill="#1d83cf"/><path d="M9 1h5v5H9z" fill="#48b3ee"/><path d="M5 9l6 3 5-3v6H5z" fill="#41a5e5"/><path d="M0 4h8v8H0z" fill="#0a64b4"/><circle cx="4" cy="8" r="2" fill="none" stroke="#fff" stroke-width="1.300"/></svg></button>
    <button aria-label="Chrome"><svg class="i16" viewBox="0 0 16 16"><path d="M8 8L1.900 4.500A7 7 0 0 1 14.100 4.500z" fill="#db4437"/><path d="M8 8l6.100-3.500A7 7 0 0 1 8 15z" fill="#f4c20d"/><path d="M8 8v7A7 7 0 0 1 1.900 4.500z" fill="#0f9d58"/><circle cx="8" cy="8" r="3.200" fill="#4285f4" stroke="#fff"/></svg></button>
    <button aria-label="Word"><svg class="i16" viewBox="0 0 16 16"><path d="M5 1h11v5H5z" fill="#41a5ee"/><path d="M5 6h11v4H5z" fill="#2b7cd3"/><path d="M5 10h11v5H5z" fill="#185abd"/><path d="M0 4h9v8H0z" fill="#134a9c"/><path d="M2 6l1 4 1.500-4L6 10l1-4" fill="none" stroke="#fff"/></svg></button>
    <button aria-label="Excel"><svg class="i16" viewBox="0 0 16 16"><path d="M5 1h11v7H5z" fill="#33c481"/><path d="M5 8h11v7H5z" fill="#1d7d47"/><path d="M0 4h9v8H0z" fill="#0f703b"/><path d="M2.500 6l4 4.500M6.500 6l-4 4.500" stroke="#fff" stroke-width="1.200"/></svg></button>
    <button aria-label="OneNote"><svg class="i16" viewBox="0 0 16 16"><path d="M5 1h11v14H5z" fill="#ae4bd5"/><path d="M12 5h4v10h-4z" fill="#ca78e8"/><path d="M0 4h9v8H0z" fill="#7719aa"/><path d="M2.700 10.500V6l3.600 4.500V6" fill="none" stroke="#fff" stroke-width="1.200"/></svg></button>
    <button aria-label="Camtasia"><svg class="i16" viewBox="0 0 16 16"><path d="M0 0h16v16H0z" fill="#f2f5ec"/><path d="M12 4H5v8h7" fill="none" stroke="#222" stroke-width="2.500"/><path d="M11 11h3v2h-3z" fill="#86bf3a"/></svg></button>
    <button aria-label="Snip"><svg class="i16" viewBox="0 0 16 16"><ellipse cx="7" cy="6" rx="7" ry="4.500" fill="#f0dede"/><path d="M4 8l8-5" stroke="#c77" stroke-width="1.200"/><path d="M8 7l5 6M13 8l-4 5" stroke="#dde" /><circle cx="10" cy="13" r="2" fill="none" stroke="#4b8ec8" stroke-width="1.300"/><circle cx="13.500" cy="12" r="2" fill="none" stroke="#4b8ec8" stroke-width="1.300"/></svg></button>
    <button class="run" aria-label="Meetings"><svg class="i16" viewBox="0 0 16 16"><path d="M12 5h4v5q0 5-5 5H7q-3 0-3-3z" fill="#b8ccf2"/><path d="M1 1h12v6q0 5-5 5H4q-3 0-3-3z" fill="#1f5be8"/></svg></button>
    <button aria-label="Calculator"><svg class="i16" viewBox="0 0 16 16"><path d="M2 0h12v16H2z" fill="#6b7f8d"/><path d="M3 1h10v4H3z" fill="#6fd0ef"/><path d="M3 7.500h7M3 10.500h7M3 13.500h7" stroke="#e8edf0" stroke-width="2" stroke-dasharray="2 1"/><path d="M11 7h2v8h-2z" fill="#35b2e5"/></svg></button>
    <button aria-label="Sticky notes"><svg class="i16" viewBox="0 0 16 16"><path d="M0 1h15v14H0z" fill="#fddf1a"/><path d="M8 15V9h7z" fill="#6a6420"/></svg></button>
    <button class="run active" aria-label="Mastercam"><svg class="i16" viewBox="0 0 16 16"><path d="M0 10L4 0h3v4l4-4h4l-1 10h-3l1-6-4 4H6V4L3 10z" fill="#d7204a"/><path d="M1 3h6M0 6h5M10 2l-4 4" stroke="#fff"/><text class="mc" x="8" y="16">2020</text></svg></button>
    <button class="run" aria-label="Photos"><svg class="i16" viewBox="0 0 16 16"><path d="M0 1h16v14H0z" fill="#3a93dc"/><path d="M0 13l6-7 9 9H0z" fill="#0d3564"/><path d="M9 9l3-2 4 4v4h-3z" fill="#1d5c9e"/><circle cx="11.500" cy="4" r="1.500" fill="#fff"/></svg></button>
  </div>
  <div class="tray">
    <svg class="i12" viewBox="0 0 12 12"><path d="M2 8l4-4 4 4" fill="none" stroke="#ddd" stroke-width="1.200"/></svg>
    <svg class="i12" viewBox="0 0 12 12"><path d="M2 4h9v5H3zM0 3h3v3H0z" fill="#e8e8e8"/></svg>
    <svg class="i12" viewBox="0 0 12 12" fill="none" stroke="#bbb"><path d="M1 11Q1 2 11 2M4 11q0-6 7-6M7 11q0-3 4-3M9 11l2-1"/></svg>
    <svg class="i12" viewBox="0 0 12 12" fill="none" stroke="#eee"><path d="M1 4.500h2L5.500 2v8L3 7.500H1zM7 4q1.500 2 0 4M9 3q2 3 0 6M10.500 2q2.500 4 0 8"/></svg>
    <time>2:14 PM<br>9/1/2020</time>
    <div class="notif"><svg class="i12" viewBox="0 0 12 12"><path d="M0 1h12v8H4l-2 2V9H0z" fill="#fff"/><path d="M2 3.500h8M2 6h6" stroke="#555"/></svg><b>12</b></div>
  </div>
</footer>
</body>
</html>
```
FILE: styles.css
```css
* { box-sizing: border-box; }
body { margin: 0; min-height: 100vh; display: flex; flex-direction: column; overflow: hidden; background: #fff; color: #3c3c3c; font: 8px/9px Lato, "Noto Sans", sans-serif; }
button, input, select { font: inherit; color: inherit; }
button { border: 0; padding: 0; margin: 0; background: none; }
h2, h3, p { margin: 0; font-weight: normal; }
svg { display: block; flex: none; }
.defs { position: absolute; width: 0; height: 0; }
.i8 { width: 8px; height: 8px; }
.i10 { width: 11px; height: 11px; }
.i12 { width: 12px; height: 12px; }
.i16 { width: 16px; height: 16px; }
.i22 { width: 21px; height: 21px; }
.flip { transform: scaleX(-1); }
.blue { color: #3973b0; }
.green { color: #3b7f5f; }
.grey { color: #777; }
.gold { color: #c8973c; }
.faded { color: #aaa; }
.red { color: #d0432c; }
.grow { flex: 1; }
.caret { display: inline-block; flex: none; border: 2px solid transparent; border-top-color: #777; border-bottom: 0; margin-left: 3px; vertical-align: middle; }

.titlebar { display: flex; height: 23px; flex: none; }
.qat { display: flex; width: 468px; height: 18px; padding-left: 8px; align-items: center; gap: 4px; }
.qat .with-caret { gap: 2px; }
.qat .with-caret .caret { margin: 0; }
.qat .more .caret { margin: 0; border-top-width: 3px; }
.with-caret { display: flex; align-items: center; }
.qat-sep { width: 1px; height: 13px; background: #ccc; margin: 0 1px 0 2px; }
.context { width: 87px; border-top: 3px solid #b07fc0; background: #f8f5fa; color: #7b4a8c; text-align: center; line-height: 17px; padding-left: 3px; }
.doc-title { flex: 1; text-align: center; line-height: 23px; padding-right: 5px; white-space: nowrap; }
.win-btns { display: flex; height: 16px; gap: 16px; align-items: center; width: 64px; }

.tabs { display: flex; height: 18px; flex: none; border-bottom: 1px solid #d4d4d4; }
.tabs .file { background: #2b579a; color: #fff; }
.tabs .tools { width: 87px; border: 1px solid #d4d4d4; border-bottom: 0; background: #fff; height: 18px; }
.mymc { line-height: 18px; color: #666; }
.helpbtn { margin-left: 7px; }
.collapse { margin: 0 3px 0 7px; }

.w24 { width: 24px; } .w26 { width: 26px; } .w28 { width: 28px; } .w31 { width: 31px; }
.w34 { width: 34px; } .w36 { width: 36px; } .w38 { width: 38px; } .w42 { width: 42px; }
.w44 { width: 44px; } .w46 { width: 46px; } .w48 { width: 48px; } .w52 { width: 52px; }
.w56 { width: 56px; } .w62 { width: 62px; }

.ribbon { display: flex; flex: none; height: 64px; border-bottom: 1px solid #bbb; }
.group { flex: none; height: 61px; border-right: 1px solid #ddd; display: flex; flex-direction: column; padding-top: 4px; }
.group h3 { font-size: 8px; line-height: 9px; text-align: center; }
.tools-row { display: flex; flex: 1; align-items: flex-start; }
.g-display { width: 56px; }
.g-analyze { width: 121px; }
.g-analyze .tools-row { padding-left: 2px; }
.g-create { width: 36px; }
.g-modify { width: 277px; }
.g-position { width: 216px; }
.g-position .tools-row, .g-offset .tools-row, .g-size .tools-row { padding-left: 3px; }
.g-offset { width: 64px; }
.g-layout { width: 86px; }
.g-layout .tools-row { padding-left: 4px; }
.g-size { width: 63px; }
.g-shapes { width: 45px; }
.big { display: flex; flex-direction: column; align-items: center; flex: none; white-space: nowrap; line-height: 9px; }
.big > span { margin-top: 3px; }
.big .caret { margin-left: 2px; }
.big > .caret { margin: 3px 0 0; }
.stack { display: flex; flex-direction: column; padding-left: 2px; margin-top: -2px; }
.s-wide { width: 70px; }
.stack button { display: flex; align-items: center; gap: 1px; height: 15px; white-space: nowrap; }

.work { flex: 1; display: flex; min-height: 0; }
.panel { width: 220px; flex: none; display: flex; flex-direction: column; border-right: 1px solid #999; }
.panel-head { display: flex; align-items: center; gap: 5px; padding: 3px 8px 0 3px; }
.panel-head h2 { flex: 1; font-size: 13px; line-height: 18px; }
.panel-tools { display: flex; gap: 4px; padding: 5px 0 0 3px; height: 21px; align-items: flex-start; }
.list { flex: 1; margin: 0 10px 0 7px; border: 1px solid #ddd; display: flex; flex-direction: column; }
.list table { border-collapse: collapse; table-layout: fixed; width: 100%; color: #222; }
.list th { height: 16px; font-weight: normal; text-align: left; padding: 0 2px; border-right: 1px solid #e4e4e4; color: #555; white-space: nowrap; }
.list td { height: 11px; padding: 0 3px; border-right: 1px solid #eee; border-bottom: 1px solid #f2f2f2; line-height: 10px; }
.c-num { width: 38px; } .c-vis { width: 32px; } .c-name { width: 65px; } .c-set { width: 38px; }
.up { display: inline-block; border: 3px solid transparent; border-bottom: 3px solid #777; border-top: 0; margin-left: 8px; vertical-align: middle; }
.list .num { text-align: right; padding-right: 18px; white-space: nowrap; }
.tick { display: inline-block; width: 9px; height: 7px; margin-right: 3px; }
.empty-rows { flex: 1; background: linear-gradient(#eee, #eee) 37px 0/1px 100% no-repeat, linear-gradient(#eee, #eee) 69px 0/1px 100% no-repeat, linear-gradient(#eee, #eee) 134px 0/1px 100% no-repeat, linear-gradient(#eee, #eee) 172px 0/1px 100% no-repeat, repeating-linear-gradient(#fff 0 10px, #f2f2f2 10px 11px); }
.hscroll { display: flex; height: 12px; align-items: center; background: #f0f0f0; padding: 0 4px; }
.hscroll i { border: 3px solid transparent; }
.hscroll .left { border-right: 4px solid #555; border-left: 0; }
.hscroll .right { border-left: 4px solid #555; border-right: 0; }
.thumb { flex: 1; height: 12px; margin: 0 14px 0 4px; background: #fff; border: 1px solid #ccc; }
.props { display: grid; grid-template-columns: 70px 1fr; row-gap: 7px; padding: 4px 23px 11px 12px; line-height: 15px; }
.props > input { height: 15px; width: 114px; border: 1px solid #bbb; padding: 0 3px; }
.props input { color: #333; }
.props > .yellow { background: #ffff80; width: 47px; }
.radios { display: flex; flex-direction: column; }
.radios label { display: flex; align-items: center; height: 13px; gap: 2px; }
.radios input[type=radio] { appearance: none; width: 8px; height: 8px; margin: 0; border: 1px solid #888; border-radius: 50%; background: #fff; }
.radios input[type=radio]:checked { background: radial-gradient(circle, #222 0 2px, #fff 2px); }
.range { display: flex; gap: 16px; padding: 2px 0 0 10px; }
.range input { width: 40px; height: 15px; border: 1px solid #aaa; background: #eee; color: #777; padding: 0 3px; }
.panel-tabs { display: flex; height: 16px; flex: none; border-top: 1px solid #ddd; }
.panel-tabs button { padding: 0 4px; }
.panel-tabs .on { border: 1px solid #bbb; border-top: 0; background: #fff; height: 15px; margin-left: 1px; }

.canvas { position: relative; flex: 1; background: #000; overflow: hidden; }
.drawing { position: absolute; inset: 0; width: 100%; height: 100%; pointer-events: none; }
.dims { font: 13px Roboto, "Liberation Sans", sans-serif; fill: #e9e62e; text-anchor: middle; }
.axis { font: bold 8px "DejaVu Sans", sans-serif; text-anchor: middle; }
.scale { font: bold 8px "DejaVu Sans", sans-serif; fill: #fff; text-anchor: middle; }
.selbar { position: absolute; left: 363px; top: 4px; width: 333px; height: 23px; border-radius: 12px; background: #4a4a4a; }
.ac { fill: #2e2e2e; font-size: 8px; }
.quickmask { position: absolute; right: 4px; top: 81px; height: 407px; display: flex; flex-direction: column; justify-content: space-between; }
.quickmask span { width: 23px; height: 23px; border-radius: 50%; background: #474747; border: 1px solid #525252; display: grid; place-items: center; }
.quickmask .blue { color: #1c3a5c; }
.quickmask .gold { color: #6f5228; }

.minibar { position: absolute; left: 634px; top: 289px; width: 233px; height: 40px; background: #fff; border: 1px solid #bbb; padding: 3px 1px; display: flex; flex-direction: column; gap: 3px; }
.mrow { display: flex; height: 14px; align-items: center; }
.drop { display: flex; align-items: center; justify-content: space-between; height: 14px; border: 1px solid #ccc; padding: 0 3px 0 10px; margin-right: 1px; }
.drop .caret { margin: 0; }
.d36 { width: 36px; } .d50 { width: 50px; }
.line { width: 28px; height: 4px; }
.ic { display: flex; align-items: center; width: 23px; padding-left: 2px; }
.ic .caret { margin-left: 2px; }
.ic2 { width: 15px; height: 14px; display: grid; place-items: center; flex: none; }
.hot { background: #cde3f5; }
.sel { position: relative; display: block; }
.sel select { appearance: none; width: 49px; height: 14px; border: 1px solid #bbb; background: #fff; padding: 0 2px; color: #333; display: block; margin: 0 1px; border-radius: 0; }
.sel::after { content: ""; position: absolute; right: 4px; top: 6px; border: 2px solid transparent; border-top-color: #555; border-bottom: 0; }
.menu { position: absolute; left: 634px; top: 337px; width: 230px; background: #fff; border: 1px solid #bbb; padding: 0 3px 1px 2px; color: #333; }
.menu button { display: flex; align-items: center; gap: 6px; height: 15px; width: 100%; }
.menu hr { height: 1px; border: 0; background: #ddd; margin: 1px 0 2px 18px; }
.sub { margin-left: auto; border: 3px solid transparent; border-left: 3px solid #111; border-right: 0; }
.tip { position: absolute; left: 763px; top: 328px; width: 143px; background: #fff; border: 1px solid #999; padding: 4px 5px 6px 6px; display: flex; gap: 6px; color: #777; box-shadow: 2px 2px 2px #0006; }
.tip strong { display: block; line-height: 9px; margin-bottom: 8px; color: #555; }
.tip p { line-height: 9px; }
.pointer { position: absolute; left: 769px; top: 317px; width: 9px; height: 13px; }

.status { display: flex; flex: none; height: 16px; background: #2b579a; color: #fff; justify-content: flex-end; align-items: center; }
.status .caret { border-top-color: #b9cbe4; margin: 0 6px 0 0; }
.status span { white-space: nowrap; }
.status button { display: flex; align-items: center; justify-content: space-between; white-space: nowrap; }
.s12 { width: 12px; } .s14 { width: 14px; } .s18 { width: 18px; } .s44 { width: 44px; } .s46 { width: 46px; } .s49 { width: 49px; }
.s50 { width: 50px; } .s57 { width: 57px; } .s59 { width: 59px; } .s80 { width: 80px; } .s114 { width: 114px; }
.status .sh { width: 19px; height: 16px; display: grid; place-items: center; justify-content: center; }
.status .lit { background: #1068cf; }
.ball { width: 9px; height: 9px; border-radius: 50%; background: radial-gradient(circle at 35% 35%, #fff, #aaa); }
.half { background: linear-gradient(135deg, #eee 50%, #667 50%); }

.taskbar { display: flex; flex: none; height: 27px; background: #070d16; color: #fff; justify-content: space-between; }
.apps { display: flex; width: 523px; }
.apps button { flex: 1; display: grid; place-items: center; border-bottom: 2px solid transparent; }
.apps .run { background: linear-gradient(#76b9ed, #76b9ed) center bottom/27px 2px no-repeat border-box; }
.apps .active { background: linear-gradient(#76b9ed, #76b9ed) center bottom/100% 2px no-repeat border-box, #3b4049; }
.mc { font: bold 6px "Liberation Sans", sans-serif; fill: #fff; text-anchor: middle; }
.tray { display: flex; align-items: center; gap: 10px; padding-right: 9px; }
.tray time { text-align: center; line-height: 12px; width: 36px; margin-left: -2px; }
.notif { position: relative; width: 18px; margin-left: 6px; }
.notif b { position: absolute; left: 6px; top: 4px; width: 11px; height: 11px; border-radius: 50%; background: #333a44; line-height: 11px; text-align: center; }
```
